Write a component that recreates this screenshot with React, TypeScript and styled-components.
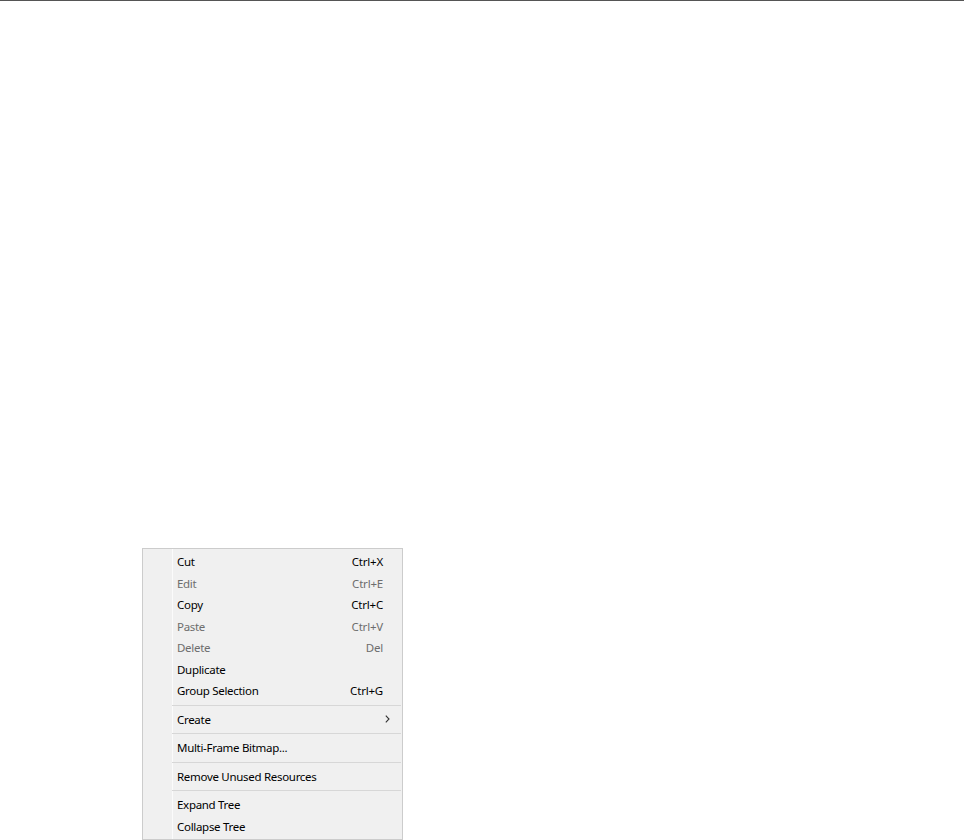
import React from "react";
import styled, { createGlobalStyle } from "styled-components";

const Global = createGlobalStyle`
  html, body { margin: 0; padding: 0; background: #ffffff; }
  body { font-family: "Noto Sans", "Open Sans", sans-serif; }
  #root { min-height: 840px; }
`;

const Page = styled.div`
  position: relative;
  width: 964px;
  height: 840px;
  overflow: hidden;
  background: #ffffff;
`;

const TopRule = styled.div`
  height: 1px;
  background: #555555;
`;

const Menu = styled.div`
  position: absolute;
  left: 142px;
  top: 548px;
  width: 259px;
  padding: 2px 0;
  background: #f0f0f0;
  border: 1px solid #cccccc;
  font-family: "Noto Sans", "Open Sans", sans-serif;
  font-size: 11.5px;
  &::before {
    content: "";
    position: absolute;
    left: 29px;
    top: 0;
    bottom: 0;
    width: 1px;
    background: #fbfbfb;
  }
`;

const Item = styled.div<{ $disabled?: boolean }>`
  position: relative;
  display: flex;
  align-items: center;
  justify-content: space-between;
  height: 21.5px;
  padding: 0 19px 0 34px;
  color: ${(p) => (p.$disabled ? "#6d6d6d" : "#000000")};
  white-space: nowrap;
`;

const Label = styled.span`
  letter-spacing: -0.3px;
`;

const Shortcut = styled.span`
  letter-spacing: -0.2px;
`;

const Arrow = styled.svg`
  width: 5px;
  height: 8px;
  margin-right: -7px;
`;

const Separator = styled.div`
  position: relative;
  height: 7px;
  display: flex;
  align-items: center;
  padding-left: 29px;
  padding-right: 1px;
  &::after {
    content: "";
    flex: 1;
    height: 1px;
    background: #d7d7d7;
  }
`;

type Entry =
  | { kind: "item"; label: string; shortcut?: string; disabled?: boolean; submenu?: boolean }
  | { kind: "sep" };

const entries: Entry[] = [
  { kind: "item", label: "Cut", shortcut: "Ctrl+X" },
  { kind: "item", label: "Edit", shortcut: "Ctrl+E", disabled: true },
  { kind: "item", label: "Copy", shortcut: "Ctrl+C" },
  { kind: "item", label: "Paste", shortcut: "Ctrl+V", disabled: true },
  { kind: "item", label: "Delete", shortcut: "Del", disabled: true },
  { kind: "item", label: "Duplicate" },
  { kind: "item", label: "Group Selection", shortcut: "Ctrl+G" },
  { kind: "sep" },
  { kind: "item", label: "Create", submenu: true },
  { kind: "sep" },
  { kind: "item", label: "Multi-Frame Bitmap..." },
  { kind: "sep" },
  { kind: "item", label: "Remove Unused Resources" },
  { kind: "sep" },
  { kind: "item", label: "Expand Tree" },
  { kind: "item", label: "Collapse Tree" },
];

export default function App() {
  return (
    <>
      <Global />
      <Page>
        <TopRule />
        <Menu>
          {entries.map((e, i) =>
            e.kind === "sep" ? (
              <Separator key={i} />
            ) : (
              <Item key={i} $disabled={e.disabled}>
                <Label>{e.label}</Label>
                {e.shortcut && <Shortcut>{e.shortcut}</Shortcut>}
                {e.submenu && (
                  <Arrow viewBox="0 0 5 8">
                    <path d="M0.8 0.6 L4 4 L0.8 7.4" fill="none" stroke="#333" strokeWidth="1.1" />
                  </Arrow>
                )}
              </Item>
            )
          )}
        </Menu>
      </Page>
    </>
  );
}
